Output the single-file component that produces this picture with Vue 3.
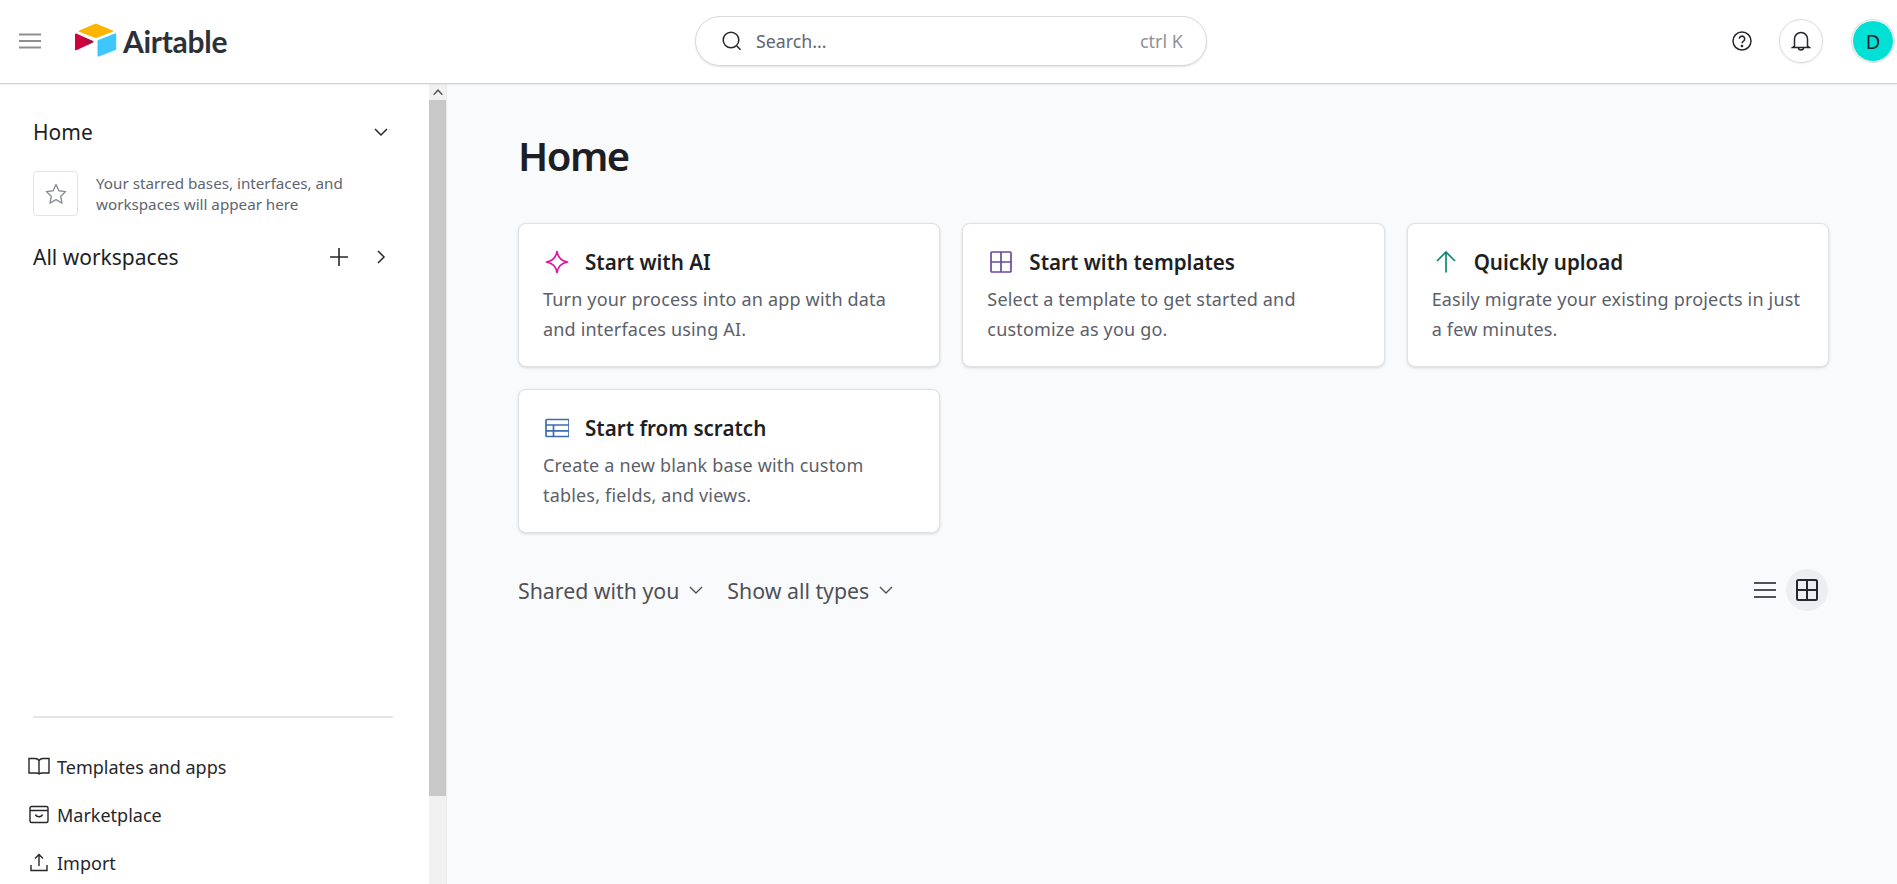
<script setup>
const cards = [
  { id: 'ai', title: 'Start with AI', lines: ['Turn your process into an app with data', 'and interfaces using AI.'] },
  { id: 'templates', title: 'Start with templates', lines: ['Select a template to get started and', 'customize as you go.'] },
  { id: 'upload', title: 'Quickly upload', lines: ['Easily migrate your existing projects in just', 'a few minutes.'] },
  { id: 'scratch', title: 'Start from scratch', lines: ['Create a new blank base with custom', 'tables, fields, and views.'] },
]
</script>

<template>
  <div class="page">
    <header class="topbar">
      <div class="brand">
        <svg class="menu" width="24" height="18" viewBox="0 0 24 18"><path d="M1 2.500h22M1 9h22M1 15.500h22" stroke="#8e8f93" stroke-width="2" fill="none"/></svg>
        <div class="logo">
          <svg width="42" height="36" viewBox="0 0 42 36">
            <path d="M19 1.200 4.200 7.400c-.8.300-.8 1 0 1.300l15 5.900c1.100.4 2.300.4 3.400 0l15.100-5.900c.8-.3.8-1 0-1.300L22.600 1.200c-1.200-.5-2.400-.5-3.600 0z" fill="#fcb400"/>
            <path d="M22.500 18v14.600c0 .7.700 1.200 1.400.9l16.600-6.500c.5-.2.700-.6.700-1V11.300c0-.7-.7-1.200-1.400-.9l-16.600 6.600c-.4.200-.7.600-.7 1z" fill="#3cc8ff"/>
            <path d="M0 11.400v15c0 .7.800 1.100 1.400.8l16.500-7.700c.6-.3.600-1.100 0-1.400L1.300 10.600C.7 10.300 0 10.700 0 11.400z" fill="#d0003f"/>
            <path d="M7.600 14.500 17.900 18c.6.300.6 1.100 0 1.400l-4.800 2.200z" fill="#a8123a"/>
          </svg>
          <span class="wordmark">Airtable</span>
        </div>
      </div>
      <div class="search">
        <svg width="24" height="24" viewBox="0 0 24 24" fill="none" stroke="#25272b" stroke-width="1.500"><circle cx="11" cy="11" r="7.800"/><path d="m16.800 17 3.700 3.700"/></svg>
        <span class="search-text">Search...</span>
        <span class="shortcut">ctrl K</span>
      </div>
      <div class="actions">
        <svg class="help" width="20" height="20" viewBox="0 0 20 20" fill="none" stroke="#25272b" stroke-width="1.500"><circle cx="10" cy="10" r="9"/><path d="M7.300 7.800a2.700 2.700 0 1 1 4.200 2.300c-1 .6-1.500 1.100-1.500 2.100"/><circle cx="10" cy="15" r=".6" fill="#25272b"/></svg>
        <div class="bell">
          <svg width="20" height="22" viewBox="0 0 20 22" fill="none" stroke="#25272b" stroke-width="1.500"><path d="M3.500 16V9a6.500 6.500 0 0 1 13 0v7l2 1.500H1.500z"/><path d="M7.500 17.500a2.500 2.500 0 0 0 5 0"/></svg>
        </div>
        <div class="avatar">D</div>
      </div>
    </header>

    <div class="body">
      <aside class="sidebar">
        <div class="side-content">
          <div class="side-top">
            <div class="side-row home-row">
              <span class="side-title">Home</span>
              <svg width="16" height="16" viewBox="0 0 16 16" fill="none" stroke="#25272b" stroke-width="1.500"><path d="m2 5 6 6 6-6"/></svg>
            </div>
            <div class="starred">
              <div class="star-box">
                <svg width="24" height="24" viewBox="0 0 24 24" fill="none" stroke="#8b8e95" stroke-width="1.400" stroke-linejoin="round"><path d="m12 2.500 2.900 6.300 6.800.8-5 4.700 1.300 6.800L12 17.700l-6 3.400 1.300-6.800-5-4.700 6.800-.8z"/></svg>
              </div>
              <p class="star-text">Your starred bases, interfaces, and<br>workspaces will appear here</p>
            </div>
            <div class="side-row all-row">
              <span class="side-title">All workspaces</span>
              <div class="all-icons">
                <svg width="20" height="20" viewBox="0 0 20 20" fill="none" stroke="#25272b" stroke-width="1.600"><path d="M10 1v18M1 10h18"/></svg>
                <svg width="16" height="16" viewBox="0 0 16 16" fill="none" stroke="#25272b" stroke-width="1.500"><path d="m5 2 6 6-6 6"/></svg>
              </div>
            </div>
          </div>
          <div class="side-bottom">
            <div class="divider"></div>
            <a class="side-link">
              <svg width="22" height="20" viewBox="0 0 22 20" fill="none" stroke="#25272b" stroke-width="1.400"><path d="M11 17V3.500C10 2 8.500 1.500 7 1.500H1v14.500h7c1.500 0 3 .3 3 1.500 0-1.200 1.500-1.500 3-1.500h7V1.500h-6C13.500 1.500 12 2 11 3.500"/></svg>
              Templates and apps
            </a>
            <a class="side-link">
              <svg width="22" height="20" viewBox="0 0 22 20" fill="none" stroke="#25272b" stroke-width="1.400"><rect x="2" y="1.500" width="18" height="16" rx="1.500"/><path d="M2 5.500h18M7.500 9.500c1 3 6 3 7 0"/></svg>
              Marketplace
            </a>
            <a class="side-link">
              <svg width="22" height="20" viewBox="0 0 22 20" fill="none" stroke="#25272b" stroke-width="1.400"><path d="M11 13V2M7 5.500 11 1.500l4 4M3 12v5.500h16V12"/></svg>
              Import
            </a>
          </div>
        </div>
        <div class="scrollbar">
          <div class="scroll-up">
            <svg width="10" height="6" viewBox="0 0 10 6"><path d="M5 0 10 5.500 8.700 6 5 2.200 1.300 6 0 5.500z" fill="#505050"/></svg>
          </div>
          <div class="scroll-thumb"></div>
        </div>
      </aside>

      <main class="main">
        <h1 class="heading">Home</h1>
        <section class="cards">
          <article v-for="card in cards" :key="card.id" class="card">
            <div class="card-head">
              <svg v-if="card.id === 'ai'" width="24" height="24" viewBox="0 0 24 24" fill="none" stroke="#e0109c" stroke-width="1.700" stroke-linejoin="round"><path d="M12 1.500c1 6 4.500 9.500 10.500 10.500-6 1-9.500 4.500-10.500 10.500C11 16.500 7.500 13 1.500 12 7.500 11 11 7.500 12 1.500z"/></svg>
              <svg v-else-if="card.id === 'templates'" width="24" height="24" viewBox="0 0 24 24" fill="none" stroke="#6b4a9e" stroke-width="1.700"><rect x="2" y="2" width="20" height="20" rx="1"/><path d="M12 2v20M2 12h20"/></svg>
              <svg v-else-if="card.id === 'upload'" width="24" height="24" viewBox="0 0 24 24" fill="none" stroke="#0f8a70" stroke-width="1.700"><path d="M12 22.500V2M3 11l9-9 9 9"/></svg>
              <svg v-else width="24" height="24" viewBox="0 0 24 24" fill="none" stroke="#3f6bb0" stroke-width="1.700"><rect x="1" y="3.500" width="23" height="17" rx="1"/><path d="M1 9h23M1 14.800h23M8.500 9v11.500"/></svg>
              <h2 class="card-title">{{ card.title }}</h2>
            </div>
            <p class="card-text">{{ card.lines[0] }}<br>{{ card.lines[1] }}</p>
          </article>
        </section>
        <div class="filters">
          <div class="filter-group">
            <span class="filter">Shared with you
              <svg width="16" height="16" viewBox="0 0 16 16" fill="none" stroke="#4f5156" stroke-width="1.400"><path d="m2 5 6 6 6-6"/></svg>
            </span>
            <span class="filter">Show all types
              <svg width="16" height="16" viewBox="0 0 16 16" fill="none" stroke="#4f5156" stroke-width="1.400"><path d="m2 5 6 6 6-6"/></svg>
            </span>
          </div>
          <div class="views">
            <svg class="list-icon" width="24" height="18" viewBox="0 0 24 18"><path d="M1 2h22M1 9h22M1 16h22" stroke="#4f5156" stroke-width="2" fill="none"/></svg>
            <div class="grid-btn">
              <svg width="22" height="22" viewBox="0 0 22 22" fill="none" stroke="#25272b" stroke-width="2"><rect x="1" y="1" width="20" height="20" rx="1.500"/><path d="M11 1v20M1 11h20"/></svg>
            </div>
          </div>
        </div>
      </main>
    </div>
  </div>
</template>

<style scoped>
.page {
  width: 1897px;
  height: 884px;
  overflow: hidden;
  font-family: "Noto Sans", "Open Sans", sans-serif;
  color: #1d1f25;
  background: #f9fafc;
}
.topbar {
  height: 84px;
  box-sizing: border-box;
  padding-bottom: 1px;
  background: #fff;
  border-bottom: 1px solid #d0d0d2;
  box-shadow: 0 1px 2px rgba(0, 0, 0, 0.06);
  display: grid;
  grid-template-columns: 695px 512px 1fr;
  align-items: center;
  position: relative;
  z-index: 2;
}
.brand {
  display: flex;
  align-items: center;
  padding-left: 18px;
}
.menu { margin-right: 33px; }
.logo {
  display: flex;
  align-items: center;
  gap: 6px;
}
.wordmark {
  font-family: Lato, "Noto Sans", sans-serif;
  font-weight: 700;
  font-size: 30px;
  letter-spacing: -0.3px;
  color: #2d3039;
}
.search {
  height: 50px;
  box-sizing: border-box;
  background: #fff;
  border: 1px solid #d9d9db;
  border-radius: 25px;
  box-shadow: 0 1px 2px rgba(0, 0, 0, 0.12);
  display: flex;
  align-items: center;
  padding: 0 23px 0 24px;
}
.search-text {
  margin-left: 12px;
  font-size: 17.800px;
  color: #616670;
}
.shortcut {
  margin-left: auto;
  font-size: 18px;
  color: #8d929b;
}
.actions {
  display: flex;
  align-items: center;
  justify-content: flex-end;
  padding-right: 4px;
}
.help { margin-right: 27px; }
.bell {
  width: 44px;
  height: 44px;
  box-sizing: border-box;
  border: 1px solid #dcdcde;
  border-radius: 50%;
  display: flex;
  align-items: center;
  justify-content: center;
  box-shadow: 0 1px 2px rgba(0, 0, 0, 0.08);
  margin-right: 30px;
}
.avatar {
  width: 40px;
  height: 40px;
  border-radius: 50%;
  background: #00e0d5;
  box-shadow: 0 0 0 1px #fff, 0 0 0 2px #d8dcdc;
  display: flex;
  align-items: center;
  justify-content: center;
  font-size: 20px;
  color: #25272b;
}
.body {
  display: flex;
  height: 800px;
}
.sidebar {
  width: 447px;
  display: flex;
  background: #fff;
  border-right: 1px solid #e8e9ec;
  box-sizing: border-box;
}
.side-content {
  width: 429px;
  display: flex;
  flex-direction: column;
  justify-content: space-between;
}
.side-top { padding: 31px 32px 0 33px; }
.side-row {
  display: flex;
  align-items: center;
  justify-content: space-between;
}
.home-row { height: 34px; padding-right: 8px; }
.side-title { font-size: 21px; color: #1d1f25; }
.starred {
  display: flex;
  align-items: center;
  margin-top: 22px;
}
.star-box {
  width: 45px;
  height: 45px;
  box-sizing: border-box;
  border: 1px solid #e3e4e6;
  border-radius: 4px;
  display: flex;
  align-items: center;
  justify-content: center;
  flex: none;
}
.star-text {
  margin: 0 0 0 18px;
  font-size: 15.200px;
  line-height: 21px;
  color: #60646e;
}
.all-row { height: 34px; margin-top: 24px; padding-right: 8px; }
.all-icons {
  display: flex;
  align-items: center;
  gap: 24px;
}
.side-bottom { padding: 0 36px 0 28px; margin-bottom: -3px; }
.divider {
  height: 2px;
  background: #e6e6e8;
  margin: 0 0 0 5px;
}
.side-link {
  height: 48px;
  display: flex;
  align-items: center;
  gap: 7px;
  font-size: 18px;
  color: #25272b;
}
.side-bottom .divider + .side-link { margin-top: 25px; }
.scrollbar {
  width: 17px;
  flex: none;
  background: #f1f1f1;
}
.scroll-up {
  height: 16px;
  display: flex;
  align-items: center;
  justify-content: center;
}
.scroll-thumb {
  height: 696px;
  background: #c8c8c8;
}
.main {
  flex: 1;
  padding: 0 68px 0 71px;
}
.heading {
  margin: 44px 0 0;
  height: 56px;
  line-height: 56px;
  font-size: 40px;
  font-weight: 600;
  letter-spacing: -1.500px;
  color: #1d1f25;
}
.cards {
  display: grid;
  grid-template-columns: repeat(3, 1fr);
  gap: 22px 22px;
  margin-top: 39px;
}
.card {
  height: 144px;
  box-sizing: border-box;
  background: #fff;
  border: 1px solid #e0e1e4;
  border-radius: 8px;
  box-shadow: 0 1px 3px rgba(0, 0, 0, 0.14);
  padding: 22px 24px 0;
}
.card-head {
  display: flex;
  align-items: center;
  gap: 16px;
  height: 32px;
  padding-left: 2px;
}
.card-title {
  margin: 0;
  font-size: 20.600px;
  font-weight: 600;
  color: #1d1f25;
}
.card-text {
  margin: 6px 0 0;
  font-size: 18px;
  letter-spacing: 0.18px;
  line-height: 30px;
  color: #5c5f69;
}
.filters {
  display: flex;
  align-items: center;
  justify-content: space-between;
  margin-top: 36px;
}
.filter-group {
  display: flex;
  align-items: center;
  gap: 23px;
}
.filter {
  display: flex;
  align-items: center;
  gap: 9px;
  font-size: 21.300px;
  color: #4f5156;
}
.views {
  display: flex;
  align-items: center;
  gap: 9px;
  padding-right: 1px;
}
.grid-btn {
  width: 42px;
  height: 42px;
  border-radius: 50%;
  background: #edeef0;
  display: flex;
  align-items: center;
  justify-content: center;
}
</style>

<style>
html, body { margin: 0; padding: 0; background: #f9fafc; overflow: hidden; }
</style>
